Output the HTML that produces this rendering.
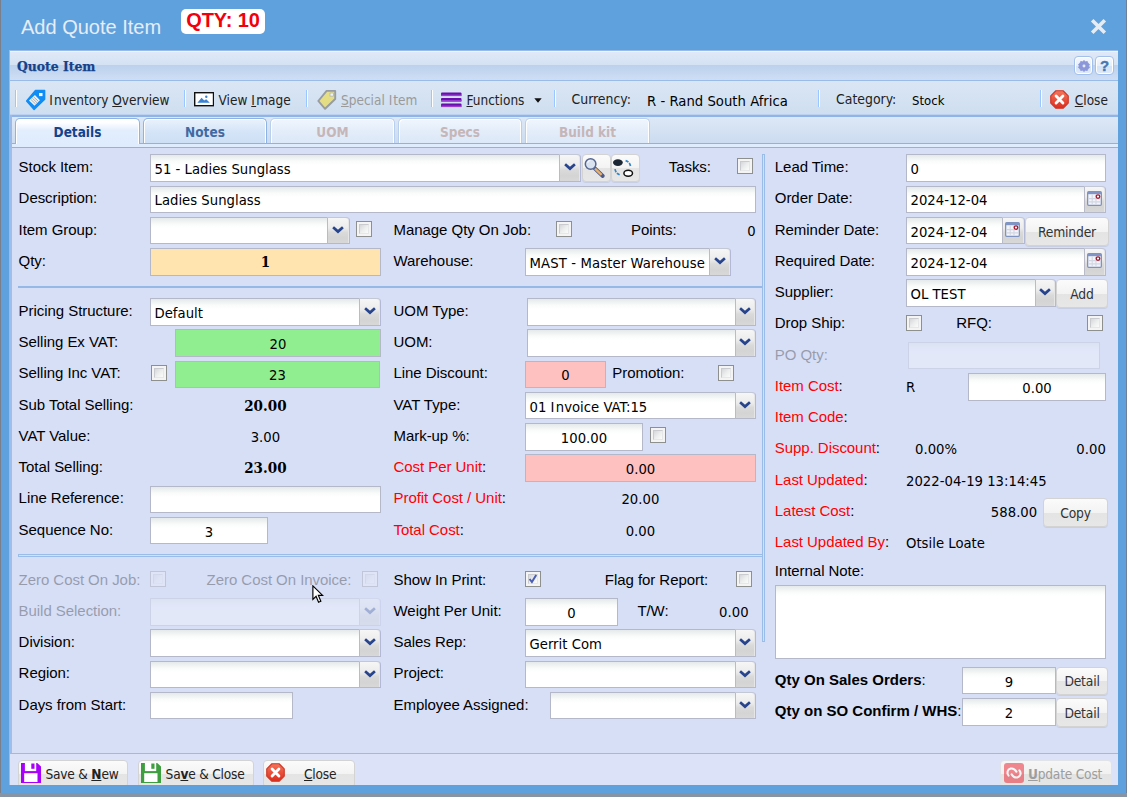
<!DOCTYPE html><html><head><meta charset="utf-8"><title>Add Quote Item</title><style>
*{box-sizing:border-box;}
html,body{margin:0;padding:0;}
body{width:1127px;height:797px;overflow:hidden;background:#5fa1dd;font-family:'Liberation Sans',sans-serif;position:relative;}
#root{position:absolute;left:0;top:0;width:1127px;height:797px;overflow:hidden;background:#5fa1dd;}
#root div, #root svg{position:absolute;}
.lb{font:15px/20px 'Liberation Sans',sans-serif;color:#000;white-space:nowrap;height:20px;letter-spacing:-0.05px;}
.lb.red{color:#000;} .lb.red b{color:#ff0000;font-weight:normal;}
.lb.dis{opacity:.3;}
.lb.bold{font-weight:bold;letter-spacing:0;} .lb.bold span{font-weight:normal;}
.tx{font:14.7px/21px 'DejaVu Sans Condensed','DejaVu Sans','Liberation Sans',sans-serif;color:#000;white-space:nowrap;height:21px;letter-spacing:0.02px;}
.tx.sb{font:bold 15px/21px 'DejaVu Serif Condensed','DejaVu Serif','Liberation Serif',serif;}
.in{border:1px solid #b5b8c8;background:#fff linear-gradient(#e5e9e9 0px,#eff2f2 3px,#f9fafa 6px,#fff 10px);font:15px 'DejaVu Sans Condensed','DejaVu Sans','Liberation Sans',sans-serif;color:#000;padding:1px 0 0 3.5px;letter-spacing:-0.12px;white-space:nowrap;overflow:hidden;}
.it{font:14.7px/21px 'DejaVu Sans Condensed','DejaVu Sans','Liberation Sans',sans-serif;color:#000;height:21px;white-space:nowrap;letter-spacing:0.02px;padding-left:4.5px;}
.it.green,.it.pink,.it.orange{padding-left:0;}
.it.orange{font:bold 15px/21px 'DejaVu Serif Condensed','DejaVu Serif','Liberation Serif',serif;}
.it.dis{opacity:.3;}
.in.green{background:#90ee90;padding-left:0;}
.in.pink{background:#ffc0c0;padding-left:0;}
.in.orange{background:#ffe4b0;padding-left:0;font:bold 15px 'DejaVu Serif Condensed','DejaVu Serif','Liberation Serif',serif;}
.in.dis, .tr.dis{opacity:.3;}
.tr{border:1px solid #b5b8c8;border-left:1px solid #b9bbc6;border-top-color:#c4c7d4;border-right-color:#b3b8d6;border-top-right-radius:4px;background:linear-gradient(#f6f6f6 0%,#ececec 40%,#dadada 58%,#d4d4d4 80%,#d8d8d8 100%);box-shadow:inset -1px 0 0 #e6e6e6;}
.tr .chev{left:50%;top:50%;margin-left:-6.5px;margin-top:-5px;}
.tr .cal{left:50%;top:50%;margin-left:-8.5px;margin-top:-9px;}
.ck{width:16px;height:16px;border:1px solid #8e8f8f;background:#f4f4f4;}
.ck i{position:absolute;display:block;left:2px;top:2px;width:10px;height:10px;border:1px solid #c9cbce;border-right-color:#e6e7e8;border-bottom-color:#e6e7e8;background:linear-gradient(135deg,#d5d7da 0%,#eceded 50%,#fbfbfb 100%);}
.ck.dis{opacity:.3;}
.bt{border:1px solid #d3d3d3;border-radius:4px;background:linear-gradient(#fbfbfb 0%,#f3f3f3 50%,#e4e4e4 51%,#e7e7e7 100%);font:13.75px 'DejaVu Sans Condensed','DejaVu Sans','Liberation Sans',sans-serif;color:#333;text-align:center;white-space:nowrap;letter-spacing:-0.2px;box-shadow:0 1px 0 rgba(190,195,215,.6);}
.bt u{text-decoration:underline;}
.bt.disb{border-color:#e2e3e6;background:linear-gradient(#f6f6f6 0%,#f1f1f1 50%,#e3e3e3 51%,#e6e6e6 100%);}
.tb{font:13.5px/20px 'DejaVu Sans Condensed','DejaVu Sans','Liberation Sans',sans-serif;color:#222;white-space:nowrap;height:20px;}
.tb b{font-weight:bold;}
.sep{width:2px;height:17px;border-left:1px solid #98c8ff;border-right:1px solid #fff;top:90px;}
.tab{top:118px;height:25px;border:1px solid #8db2e3;border-bottom:none;border-radius:5px 5px 0 0;font:bold 13.5px/26px 'DejaVu Sans Condensed','DejaVu Sans','Liberation Sans',sans-serif;text-align:center;color:#416aa3;background:linear-gradient(#eaf2fc 0%,#d6e5f8 50%,#cddff5 100%);box-shadow:inset 1px 1px 0 #fff, inset -1px 0 0 #fff;}
.tab.act{color:#15428b;background:linear-gradient(#ffffff 0%,#fdfeff 15%,#e3eefd 45%,#deecfd 100%);height:26px;}
.tab.dis{color:#c6b6b8;background:linear-gradient(#f1f6fd 0%,#e3edfa 50%,#dce8f8 100%);border-color:#b9cfee;}
</style></head><body><div id="root">
<div style="left:0;top:0;width:1px;height:797px;background:#7a7f8c;"></div>
<div style="left:0;top:793px;width:1127px;height:4px;background:#8893a3;"></div>
<div style="left:1126px;top:0;width:1px;height:793px;background:#6d7f99;"></div>
<div style="left:21px;top:15px;font:20px/24px 'Liberation Sans',sans-serif;color:#e6edf6;white-space:nowrap;">Add Quote Item</div>
<div style="left:181px;top:9px;width:84px;height:25px;border-radius:5px;background:#fff;font:bold 20px/23px 'Liberation Sans',sans-serif;color:#f2000c;text-align:center;white-space:nowrap;letter-spacing:-0.1px;">QTY: 10</div>
<svg style="left:1090px;top:18px" width="17" height="17" viewBox="0 0 17 17"><path d="M2.2 2.2 L14.8 14.8 M14.8 2.2 L2.2 14.8" stroke="#e4ecf6" stroke-width="3.6" fill="none"/></svg>
<div style="left:9px;top:50px;width:1109px;height:735px;border:1px solid #99bbe8;border-right:none;background:#d7dff7;"></div>
<div style="left:10px;top:51px;width:1108px;height:29px;background:linear-gradient(#ffffff 0px,#dfe9f7 1px,#d5e2f4 13.5px,#bdd0ed 14.5px,#c1d4ef 18px,#cedef4 29px);"></div>
<div style="left:10px;top:80px;width:1108px;height:1px;background:#99bbe8;"></div>
<div style="left:17px;top:56px;font:bold 13.75px/20px 'DejaVu Serif Condensed','DejaVu Serif','Liberation Serif',serif;color:#15428b;white-space:nowrap;-webkit-text-stroke:0.25px #15428b;">Quote Item</div>
<div style="left:1074px;top:56px;width:19px;height:19px;border:1px solid #a3c0ea;border-radius:4px;background:linear-gradient(#f6f9fe 0%,#e6effb 50%,#d3e3f8 51%,#dfeafa 100%);box-shadow:inset 0 0 0 1px #fff;"><svg style="left:2.5px;top:2.5px" width="12" height="12" viewBox="0 0 14 14"><path d="M7 0.6 L8.7 2 L10.9 1.7 L11.6 3.8 L13.4 5.1 L12.5 7 L13.4 8.9 L11.6 10.2 L10.9 12.3 L8.7 12 L7 13.4 L5.3 12 L3.1 12.3 L2.4 10.2 L0.6 8.9 L1.5 7 L0.6 5.1 L2.4 3.8 L3.1 1.7 L5.3 2 Z" fill="#8b97d8" stroke="#8b97d8" stroke-width=".9" stroke-linejoin="round"/><circle cx="7" cy="7" r="1.7" fill="#e4e9f8"/></svg></div>
<div style="left:1095px;top:56px;width:19px;height:19px;border:1px solid #a3c0ea;border-radius:4px;background:linear-gradient(#f6f9fe 0%,#e6effb 50%,#d3e3f8 51%,#dfeafa 100%);box-shadow:inset 0 0 0 1px #fff;"><div style="left:0;top:0;width:17px;height:17px;font:bold 15px/17px 'Liberation Sans',sans-serif;color:#4a78b0;text-align:center;-webkit-text-stroke:0.4px #4a78b0;">?</div></div>
<div style="left:10px;top:81px;width:1108px;height:34px;background:linear-gradient(#dbe6f4 0%,#d4e2f2 50%,#cfdef0 100%);"></div>
<div style="left:10px;top:117px;width:1108px;height:26px;background:linear-gradient(#dde8f6 0%,#ccdbf0 100%);"></div>
<div style="left:10px;top:114px;width:1108px;height:1px;background:#bcd1ef;"></div>
<div style="left:10px;top:115px;width:1108px;height:2px;background:#91b4e6;"></div>
<div style="left:10px;top:115px;width:2px;height:33px;background:#9dbae7;"></div>
<div style="left:10px;top:148px;width:2px;height:605px;background:#9fbee9;"></div>
<div style="left:10px;top:754px;width:1108px;height:31px;background:#dce3f8;"></div>
<div style="left:12px;top:143px;width:1106px;height:1px;background:#8db2e3;"></div>
<div style="left:12px;top:144px;width:1106px;height:3px;background:#deecfd;"></div>
<div style="left:12px;top:147px;width:1106px;height:1px;background:#8db2e3;"></div>
<div class="tab act" style="left:15px;width:125px;">Details</div>
<div class="tab " style="left:143px;width:124px;">Notes</div>
<div class="tab dis" style="left:270px;width:125px;">UOM</div>
<div class="tab dis" style="left:398px;width:124px;">Specs</div>
<div class="tab dis" style="left:525px;width:125px;">Build kit</div>
<svg style="left:25px;top:88px" width="22" height="24" viewBox="0 0 22 24"><path d="M10.4 2.4 H19.7 V11.2 L9.1 21.5 L1.6 13 Z" fill="#108cf5" stroke="#108cf5" stroke-width="1.3" stroke-linejoin="round"/><path d="M9.9 7.1 L14.95 12.2 L9.5 17.8 L4 12.6 Z" fill="#eef0f0"/><path d="M6 11.6 L10.6 16 M7.3 10.2 L12 14.7 M8.7 8.9 L13.3 13.3" stroke="#a9b0b6" stroke-width="1" fill="none"/><rect x="14.1" y="5" width="3.4" height="3.1" fill="#fff"/></svg>
<div class="tb" style="left:49.2px;top:89.5px;"><span style="letter-spacing:1.2px">I</span>nventory <u>O</u>verview</div>
<div class="sep" style="left:15px;"></div>
<div class="sep" style="left:184px;"></div>
<div class="sep" style="left:306px;"></div>
<div class="sep" style="left:431px;"></div>
<div class="sep" style="left:554px;"></div>
<div class="sep" style="left:818px;"></div>
<div class="sep" style="left:1040px;"></div>
<svg style="left:194px;top:92px" width="20" height="15" viewBox="0 0 20 15"><rect x="0.7" y="0.7" width="18.8" height="13" fill="#fff" stroke="#111" stroke-width="1.4"/><path d="M3.4 10.8 L7.6 5.8 L10.2 8.6 L12.2 7.2 L15.8 10.8 Z" fill="#3a82d2"/><circle cx="12.3" cy="4.7" r="1.2" fill="#3a82d2"/></svg>
<div class="tb" style="left:218.6px;top:89.5px;">View <u style="letter-spacing:1.3px">I</u>mage</div>
<svg style="left:316.2px;top:88px;opacity:.6" width="22" height="24" viewBox="0 0 22 24"><path d="M10.6 2.9 H19.2 V11 L9.1 20.8 L2.3 13 Z" fill="#f2dc3c" stroke="#6f6f6f" stroke-width="1.9" stroke-linejoin="round"/><rect x="14" y="5" width="3.4" height="3.1" fill="#fff" stroke="#8a8a8a" stroke-width=".7"/></svg>
<div class="tb" style="left:341px;top:89.5px;color:#9a9a9a;"><u>S</u>pecial <span style="letter-spacing:1.1px">I</span>tem</div>
<svg style="left:441px;top:92px" width="21" height="16" viewBox="0 0 21 16"><rect x="0" y="0.5" width="20.5" height="3.6" rx="1" fill="#6a0dad"/><rect x="0" y="6" width="20.5" height="3.6" rx="1" fill="#6a0dad"/><rect x="0" y="11.5" width="20.5" height="3.6" rx="1" fill="#6a0dad"/><rect x="0" y="2.6" width="20.5" height="1.5" fill="#9a3fd0"/><rect x="0" y="8.1" width="20.5" height="1.5" fill="#9a3fd0"/><rect x="0" y="13.6" width="20.5" height="1.5" fill="#9a3fd0"/></svg>
<div class="tb" style="left:466.5px;top:89.5px;"><u>F</u>unctions</div>
<svg style="left:534px;top:98px" width="8" height="5" viewBox="0 0 8 5"><path d="M0.3 0.3 H7.7 L4 4.7 Z" fill="#111"/></svg>
<div class="tb" style="left:571.5px;top:89.5px;top:88.8px;font-size:13.9px;">Currency:</div>
<div class="tx" style="left:647px;top:90px;">R - Rand South Africa</div>
<div class="tb" style="left:836px;top:89.5px;top:88.8px;font-size:13.9px;">Category:</div>
<div class="tx" style="left:912px;top:90px;font-size:13px;">Stock</div>
<svg style="left:1050px;top:90px" width="19" height="19" viewBox="0 0 20 20"><defs><linearGradient id="cg1050" x1="0" y1="0" x2="0" y2="1"><stop offset="0" stop-color="#f4765c"/><stop offset="1" stop-color="#dc2c1c"/></linearGradient></defs><path d="M6.2 0.8 H13.8 L19.2 6.2 V13.8 L13.8 19.2 H6.2 L0.8 13.8 V6.2 Z" fill="url(#cg1050)" stroke="#cf3524" stroke-width="1.2" stroke-linejoin="round"/><path d="M6.4 6.4 L13.6 13.6 M13.6 6.4 L6.4 13.6" stroke="#fff" stroke-width="3" stroke-linecap="round"/></svg>
<div class="tb" style="left:1074.8px;top:89.5px;"><u>C</u>lose</div>
<div style="left:18px;top:286px;width:745px;height:2px;background:#95b8e7;"></div>
<div style="left:18px;top:554px;width:745px;height:3px;border:1px solid #9abce8;border-right:none;"></div>
<div style="left:762px;top:154px;width:3px;height:488px;border:1px solid #9abce8;"></div>
<div class="lb " style="left:18.6px;top:157px;">Stock Item:</div>
<div class="in " style="left:150px;top:154px;width:409px;height:28px;border-right:none;"></div>
<div class="it " style="left:150px;top:158px;width:409px;text-align:left;">51 - Ladies Sunglass</div>
<div class="tr  t-chev" style="left:559px;top:154px;width:22px;height:28px;"><svg class="chev" width="12" height="8" viewBox="0 0 12 8"><path d="M1.1 1.3 L6 5.6 L10.9 1.3" fill="none" stroke="#27448c" stroke-width="2.7" stroke-linejoin="miter"/></svg></div>
<div class="lb " style="left:18.6px;top:188px;">Description:</div>
<div class="in " style="left:150px;top:186px;width:606px;height:27px;"></div>
<div class="it " style="left:150px;top:189px;width:606px;text-align:left;">Ladies Sunglass</div>
<div class="lb " style="left:18.6px;top:220px;">Item Group:</div>
<div class="in " style="left:150px;top:217px;width:177px;height:27px;border-right:none;"></div>
<div class="tr  t-chev" style="left:327px;top:217px;width:23px;height:27px;"><svg class="chev" width="12" height="8" viewBox="0 0 12 8"><path d="M1.1 1.3 L6 5.6 L10.9 1.3" fill="none" stroke="#27448c" stroke-width="2.7" stroke-linejoin="miter"/></svg></div>
<div class="ck " style="left:356px;top:221px;"><i></i></div>
<div class="lb " style="left:393.5px;top:220px;">Manage Qty On Job:</div>
<div class="ck " style="left:556px;top:221px;"><i></i></div>
<div class="lb " style="left:631px;top:220px;">Points:</div>
<div class="tx " style="right:371.4px;top:220.00px;">0</div>
<div class="lb " style="left:18.6px;top:251px;">Qty:</div>
<div class="in orange" style="left:150px;top:248px;width:231px;height:28px;"></div>
<div class="it orange" style="left:150px;top:252px;width:231px;text-align:center;padding-left:0;">1</div>
<div class="lb " style="left:393.5px;top:251px;">Warehouse:</div>
<div class="in " style="left:525px;top:248px;width:184px;height:28px;border-right:none;"></div>
<div class="it " style="left:525px;top:252px;width:184px;text-align:left;"><span style="letter-spacing:0.12px">MAST - Master Warehouse</span></div>
<div class="tr  t-chev" style="left:709px;top:248px;width:22px;height:28px;"><svg class="chev" width="12" height="8" viewBox="0 0 12 8"><path d="M1.1 1.3 L6 5.6 L10.9 1.3" fill="none" stroke="#27448c" stroke-width="2.7" stroke-linejoin="miter"/></svg></div>
<div class="bt " style="left:582px;top:154px;width:29px;height:28px;line-height:27px;"><svg style="left:0;top:0" width="27" height="26" viewBox="0 0 27 26"><path d="M11.4 13 L19.8 21" stroke="#4d5a88" stroke-width="3.8" stroke-linecap="round"/><path d="M12 13.6 L18.6 19.9" stroke="#e8b06a" stroke-width="2.3" stroke-linecap="butt"/><circle cx="7.6" cy="9" r="5.3" fill="#d9e2ef" stroke="#566792" stroke-width="1.5"/><path d="M4.6 8 A3.2 3.2 0 0 1 7.4 5.4" stroke="#f3f6fb" stroke-width="1.2" fill="none"/></svg></div>
<div class="bt " style="left:611px;top:154px;width:29px;height:28px;line-height:27px;"><svg style="left:0;top:0" width="27" height="26" viewBox="0 0 27 26"><ellipse cx="5.9" cy="7.6" rx="4.9" ry="3.3" fill="#1a2633"/><ellipse cx="16.2" cy="18.3" rx="4.3" ry="3" fill="#fff" stroke="#111" stroke-width="1.5"/><path d="M13.6 5.6 Q17.8 7 18.6 11.4" fill="none" stroke="#2f86c9" stroke-width="1.7" stroke-dasharray="3.2 1.2"/><path d="M3 14.2 Q3.8 18.6 8.2 20" fill="none" stroke="#2f86c9" stroke-width="1.7" stroke-dasharray="3.2 1.2"/></svg></div>
<div class="lb " style="left:668.7px;top:157px;">Tasks:</div>
<div class="ck " style="left:737px;top:158px;"><i></i></div>
<div class="lb " style="left:18.6px;top:301px;">Pricing Structure:</div>
<div class="in " style="left:150px;top:298px;width:209px;height:28px;border-right:none;"></div>
<div class="it " style="left:150px;top:302px;width:209px;text-align:left;">Default</div>
<div class="tr  t-chev" style="left:359px;top:298px;width:22px;height:28px;"><svg class="chev" width="12" height="8" viewBox="0 0 12 8"><path d="M1.1 1.3 L6 5.6 L10.9 1.3" fill="none" stroke="#27448c" stroke-width="2.7" stroke-linejoin="miter"/></svg></div>
<div class="lb " style="left:393.5px;top:301px;">UOM Type:</div>
<div class="in " style="left:527px;top:298px;width:208px;height:28px;border-right:none;"></div>
<div class="tr  t-chev" style="left:735px;top:298px;width:21px;height:28px;"><svg class="chev" width="12" height="8" viewBox="0 0 12 8"><path d="M1.1 1.3 L6 5.6 L10.9 1.3" fill="none" stroke="#27448c" stroke-width="2.7" stroke-linejoin="miter"/></svg></div>
<div class="lb " style="left:18.6px;top:332px;">Selling Ex VAT:</div>
<div class="in green" style="left:175px;top:329px;width:206px;height:28px;"></div>
<div class="it green" style="left:175px;top:333px;width:206px;text-align:center;padding-left:0;">20</div>
<div class="lb " style="left:393.5px;top:332px;">UOM:</div>
<div class="in " style="left:527px;top:329px;width:208px;height:28px;border-right:none;"></div>
<div class="tr  t-chev" style="left:735px;top:329px;width:21px;height:28px;"><svg class="chev" width="12" height="8" viewBox="0 0 12 8"><path d="M1.1 1.3 L6 5.6 L10.9 1.3" fill="none" stroke="#27448c" stroke-width="2.7" stroke-linejoin="miter"/></svg></div>
<div class="lb " style="left:18.6px;top:363px;">Selling Inc VAT:</div>
<div class="ck " style="left:151px;top:365px;"><i></i></div>
<div class="in green" style="left:175px;top:361px;width:205px;height:27px;"></div>
<div class="it green" style="left:175px;top:364px;width:205px;text-align:center;padding-left:0;">23</div>
<div class="lb " style="left:393.5px;top:363px;">Line Discount:</div>
<div class="in pink" style="left:525px;top:361px;width:81px;height:27px;"></div>
<div class="it pink" style="left:525px;top:364px;width:81px;text-align:center;padding-left:0;">0</div>
<div class="lb " style="left:612.3px;top:363px;">Promotion:</div>
<div class="ck " style="left:718px;top:365px;"><i></i></div>
<div class="lb " style="left:18.6px;top:395px;">Sub Total Selling:</div>
<div class="tx sb" style="left:165.39999999999998px;width:200px;text-align:center;top:396.00px;">20.00</div>
<div class="lb " style="left:393.5px;top:395px;">VAT Type:</div>
<div class="in " style="left:525px;top:392px;width:210px;height:27px;border-right:none;"></div>
<div class="it " style="left:525px;top:396px;width:210px;text-align:left;">01 <span style="letter-spacing:1.3px">I</span>nvoice VAT:15</div>
<div class="tr  t-chev" style="left:735px;top:392px;width:21px;height:27px;"><svg class="chev" width="12" height="8" viewBox="0 0 12 8"><path d="M1.1 1.3 L6 5.6 L10.9 1.3" fill="none" stroke="#27448c" stroke-width="2.7" stroke-linejoin="miter"/></svg></div>
<div class="lb " style="left:18.6px;top:426px;">VAT Value:</div>
<div class="tx " style="left:165.39999999999998px;width:200px;text-align:center;top:426.00px;">3.00</div>
<div class="lb " style="left:393.5px;top:426px;">Mark-up %:</div>
<div class="in " style="left:525px;top:423px;width:118px;height:28px;padding-left:0;"></div>
<div class="it " style="left:525px;top:427px;width:118px;text-align:center;padding-left:0;">100.00</div>
<div class="ck " style="left:650px;top:427px;"><i></i></div>
<div class="lb " style="left:18.6px;top:457px;">Total Selling:</div>
<div class="tx sb" style="left:165.39999999999998px;width:200px;text-align:center;top:458.00px;">23.00</div>
<div class="lb red" style="left:393.5px;top:457px;"><b>Cost Per Unit</b>:</div>
<div class="in pink" style="left:525px;top:454px;width:231px;height:28px;"></div>
<div class="it pink" style="left:525px;top:458px;width:231px;text-align:center;padding-left:0;">0.00</div>
<div class="lb " style="left:18.6px;top:488px;">Line Reference:</div>
<div class="in " style="left:150px;top:486px;width:231px;height:27px;"></div>
<div class="lb red" style="left:393.5px;top:488px;"><b>Profit Cost / Unit</b>:</div>
<div class="tx " style="left:540.4px;width:200px;text-align:center;top:488.00px;">20.00</div>
<div class="lb " style="left:18.6px;top:520px;">Sequence No:</div>
<div class="in " style="left:150px;top:517px;width:118px;height:27px;padding-left:0;"></div>
<div class="it " style="left:150px;top:521px;width:118px;text-align:center;padding-left:0;">3</div>
<div class="lb red" style="left:393.5px;top:520px;"><b>Total Cost</b>:</div>
<div class="tx " style="left:540.4px;width:200px;text-align:center;top:520.00px;">0.00</div>
<div class="lb dis" style="left:18.6px;top:570px;">Zero Cost On Job:</div>
<div class="ck dis" style="left:150px;top:571px;"><i></i></div>
<div class="lb dis" style="left:206.6px;top:570px;">Zero Cost On Invoice:</div>
<div class="ck dis" style="left:362px;top:571px;"><i></i></div>
<div class="lb " style="left:393.5px;top:570px;">Show In Print:</div>
<div class="ck " style="left:525px;top:571px;"><i></i><svg width="16" height="16" viewBox="0 0 16 16" style="position:absolute;left:-1px;top:-1px"><path d="M4.6 8 L6.9 11 L11.2 3.9" fill="none" stroke="#4a5fb4" stroke-width="2"/></svg></div>
<div class="lb " style="left:604.8px;top:570px;">Flag for Report:</div>
<div class="ck " style="left:736px;top:571px;"><i></i></div>
<div class="lb dis" style="left:18.6px;top:601px;">Build Selection:</div>
<div class="in dis" style="left:150px;top:598px;width:209px;height:28px;border-right:none;"></div>
<div class="tr dis t-chev" style="left:359px;top:598px;width:22px;height:28px;"><svg class="chev" width="12" height="8" viewBox="0 0 12 8"><path d="M1.1 1.3 L6 5.6 L10.9 1.3" fill="none" stroke="#27448c" stroke-width="2.7" stroke-linejoin="miter"/></svg></div>
<div class="lb " style="left:393.5px;top:601px;">Weight Per Unit:</div>
<div class="in " style="left:525px;top:598px;width:93px;height:28px;padding-left:0;"></div>
<div class="it " style="left:525px;top:602px;width:93px;text-align:center;padding-left:0;">0</div>
<div class="lb " style="left:637.4px;top:601px;">T/W:</div>
<div class="tx " style="right:378.4px;top:601.00px;">0.00</div>
<div class="lb " style="left:18.6px;top:632px;">Division:</div>
<div class="in " style="left:150px;top:629px;width:209px;height:28px;border-right:none;"></div>
<div class="tr  t-chev" style="left:359px;top:629px;width:22px;height:28px;"><svg class="chev" width="12" height="8" viewBox="0 0 12 8"><path d="M1.1 1.3 L6 5.6 L10.9 1.3" fill="none" stroke="#27448c" stroke-width="2.7" stroke-linejoin="miter"/></svg></div>
<div class="lb " style="left:393.5px;top:632px;">Sales Rep:</div>
<div class="in " style="left:525px;top:629px;width:210px;height:28px;border-right:none;"></div>
<div class="it " style="left:525px;top:633px;width:210px;text-align:left;">Gerrit Com</div>
<div class="tr  t-chev" style="left:735px;top:629px;width:21px;height:28px;"><svg class="chev" width="12" height="8" viewBox="0 0 12 8"><path d="M1.1 1.3 L6 5.6 L10.9 1.3" fill="none" stroke="#27448c" stroke-width="2.7" stroke-linejoin="miter"/></svg></div>
<div class="lb " style="left:18.6px;top:663px;">Region:</div>
<div class="in " style="left:150px;top:661px;width:209px;height:27px;border-right:none;"></div>
<div class="tr  t-chev" style="left:359px;top:661px;width:22px;height:27px;"><svg class="chev" width="12" height="8" viewBox="0 0 12 8"><path d="M1.1 1.3 L6 5.6 L10.9 1.3" fill="none" stroke="#27448c" stroke-width="2.7" stroke-linejoin="miter"/></svg></div>
<div class="lb " style="left:393.5px;top:663px;">Project:</div>
<div class="in " style="left:525px;top:661px;width:210px;height:27px;border-right:none;"></div>
<div class="tr  t-chev" style="left:735px;top:661px;width:21px;height:27px;"><svg class="chev" width="12" height="8" viewBox="0 0 12 8"><path d="M1.1 1.3 L6 5.6 L10.9 1.3" fill="none" stroke="#27448c" stroke-width="2.7" stroke-linejoin="miter"/></svg></div>
<div class="lb " style="left:18.6px;top:695px;">Days from Start:</div>
<div class="in " style="left:150px;top:692px;width:143px;height:27px;"></div>
<div class="lb " style="left:393.5px;top:695px;">Employee Assigned:</div>
<div class="in " style="left:550px;top:692px;width:185px;height:27px;border-right:none;"></div>
<div class="tr  t-chev" style="left:735px;top:692px;width:21px;height:27px;"><svg class="chev" width="12" height="8" viewBox="0 0 12 8"><path d="M1.1 1.3 L6 5.6 L10.9 1.3" fill="none" stroke="#27448c" stroke-width="2.7" stroke-linejoin="miter"/></svg></div>
<div class="lb " style="left:774.8px;top:157px;">Lead Time:</div>
<div class="in " style="left:906px;top:154px;width:200px;height:28px;"></div>
<div class="it " style="left:906px;top:158px;width:200px;text-align:left;">0</div>
<div class="lb " style="left:774.8px;top:188px;">Order Date:</div>
<div class="in " style="left:906px;top:186px;width:178px;height:27px;border-right:none;"></div>
<div class="it " style="left:906px;top:189px;width:178px;text-align:left;">2024-12-04</div>
<div class="tr  t-cal" style="left:1084px;top:186px;width:22px;height:27px;"><svg class="cal" width="15" height="15" viewBox="0 0 15 15"><rect x="0.65" y="0.65" width="13.7" height="13.7" rx="1" fill="#f3f4f8" stroke="#7f93c2" stroke-width="1.3"/><rect x="1" y="1" width="13" height="2.2" fill="#8094c6"/><path d="M1.4 7.6H13.6M1.4 10.9H13.6M5.2 3.6V13.6M9 3.6V13.6" stroke="#d2d6e3" stroke-width="1.1"/><circle cx="11" cy="5.6" r="1.8" fill="#fff" stroke="#a3182e" stroke-width="1.3"/></svg></div>
<div class="lb " style="left:774.8px;top:220px;">Reminder Date:</div>
<div class="in " style="left:906px;top:217px;width:96px;height:27px;border-right:none;"></div>
<div class="it " style="left:906px;top:221px;width:96px;text-align:left;">2024-12-04</div>
<div class="tr  t-cal" style="left:1002px;top:217px;width:23px;height:27px;"><svg class="cal" width="15" height="15" viewBox="0 0 15 15"><rect x="0.65" y="0.65" width="13.7" height="13.7" rx="1" fill="#f3f4f8" stroke="#7f93c2" stroke-width="1.3"/><rect x="1" y="1" width="13" height="2.2" fill="#8094c6"/><path d="M1.4 7.6H13.6M1.4 10.9H13.6M5.2 3.6V13.6M9 3.6V13.6" stroke="#d2d6e3" stroke-width="1.1"/><circle cx="11" cy="5.6" r="1.8" fill="#fff" stroke="#a3182e" stroke-width="1.3"/></svg></div>
<div class="bt " style="left:1025px;top:217px;width:84px;height:29px;line-height:28px;">Reminder</div>
<div class="lb " style="left:774.8px;top:251px;">Required Date:</div>
<div class="in " style="left:906px;top:248px;width:178px;height:28px;border-right:none;"></div>
<div class="it " style="left:906px;top:252px;width:178px;text-align:left;">2024-12-04</div>
<div class="tr  t-cal" style="left:1084px;top:248px;width:22px;height:28px;"><svg class="cal" width="15" height="15" viewBox="0 0 15 15"><rect x="0.65" y="0.65" width="13.7" height="13.7" rx="1" fill="#f3f4f8" stroke="#7f93c2" stroke-width="1.3"/><rect x="1" y="1" width="13" height="2.2" fill="#8094c6"/><path d="M1.4 7.6H13.6M1.4 10.9H13.6M5.2 3.6V13.6M9 3.6V13.6" stroke="#d2d6e3" stroke-width="1.1"/><circle cx="11" cy="5.6" r="1.8" fill="#fff" stroke="#a3182e" stroke-width="1.3"/></svg></div>
<div class="lb " style="left:774.8px;top:282px;">Supplier:</div>
<div class="in " style="left:906px;top:279px;width:129px;height:28px;border-right:none;"></div>
<div class="it " style="left:906px;top:283px;width:129px;text-align:left;">OL TEST</div>
<div class="tr  t-chev" style="left:1035px;top:279px;width:21px;height:28px;"><svg class="chev" width="12" height="8" viewBox="0 0 12 8"><path d="M1.1 1.3 L6 5.6 L10.9 1.3" fill="none" stroke="#27448c" stroke-width="2.7" stroke-linejoin="miter"/></svg></div>
<div class="bt " style="left:1056px;top:279px;width:52px;height:29px;line-height:28px;">Add</div>
<div class="lb " style="left:774.8px;top:313px;">Drop Ship:</div>
<div class="ck " style="left:906px;top:315px;"><i></i></div>
<div class="lb " style="left:956.3px;top:313px;">RFQ:</div>
<div class="ck " style="left:1087px;top:315px;"><i></i></div>
<div class="lb dis" style="left:774.8px;top:345px;">PO Qty:</div>
<div class="in dis" style="left:908px;top:342px;width:192px;height:27px;"></div>
<div class="lb red" style="left:774.8px;top:376px;"><b>Item Cost</b>:</div>
<div class="tx " style="left:906px;top:376.00px;">R</div>
<div class="in " style="left:968px;top:373px;width:138px;height:28px;padding-left:0;"></div>
<div class="it " style="left:968px;top:377px;width:138px;text-align:center;padding-left:0;">0.00</div>
<div class="lb red" style="left:774.8px;top:407px;"><b>Item Code</b>:</div>
<div class="lb red" style="left:774.8px;top:438px;"><b>Supp. Discount</b>:</div>
<div class="tx " style="left:915px;top:438.00px;">0.00%</div>
<div class="tx " style="right:21.200000000000045px;top:438.00px;">0.00</div>
<div class="lb red" style="left:774.8px;top:470px;"><b>Last Updated</b>:</div>
<div class="tx " style="left:906px;top:470.00px;">2022-04-19 13:14:45</div>
<div class="lb red" style="left:774.8px;top:501px;"><b>Latest Cost</b>:</div>
<div class="tx " style="right:89.79999999999995px;top:501.00px;">588.00</div>
<div class="bt " style="left:1043px;top:498px;width:65px;height:29px;line-height:28px;">Copy</div>
<div class="lb red" style="left:774.8px;top:532px;"><b>Last Updated By</b>:</div>
<div class="tx " style="left:906px;top:532.00px;">Otsile Loate</div>
<div class="lb " style="left:774.8px;top:561px;">Internal Note:</div>
<div class="in " style="left:775px;top:585px;width:331px;height:74px;"></div>
<div class="lb bold" style="left:774.8px;top:670px;">Qty On Sales Orders<span>:</span></div>
<div class="in " style="left:962px;top:667px;width:94px;height:27px;padding-left:0;"></div>
<div class="it " style="left:962px;top:671px;width:94px;text-align:center;padding-left:0;">9</div>
<div class="bt " style="left:1056px;top:667px;width:52px;height:28px;line-height:27px;">Detail</div>
<div class="lb bold" style="left:774.8px;top:701px;">Qty on SO Confirm / WHS<span>:</span></div>
<div class="in " style="left:962px;top:698px;width:94px;height:28px;padding-left:0;"></div>
<div class="it " style="left:962px;top:702px;width:94px;text-align:center;padding-left:0;">2</div>
<div class="bt " style="left:1056px;top:698px;width:52px;height:29px;line-height:28px;">Detail</div>
<div style="left:10px;top:753px;width:1108px;height:1px;background:#99bbe8;"></div>
<div style="left:10px;top:754px;width:1108px;height:31px;overflow:hidden;">
<div class="bt " style="left:8px;top:6px;width:110px;height:28px;border-radius:4px;box-shadow:none;"><svg style="left:2px;top:2px" width="20" height="20" viewBox="0 0 20 20"><path d="M0 0 H16.2 L20 3.4 V20 H0 Z" fill="#a800fb"/><rect x="3.9" y="0" width="11.3" height="8.1" fill="#fff"/><rect x="10.3" y="0.5" width="3.2" height="5.3" fill="#a800fb"/><rect x="3.2" y="10.2" width="13.3" height="8.8" fill="#fff"/></svg><div class="tb" style="left:26.4px;top:3px;font-size:13.6px;color:#222">Save &amp; <b><u>N</u></b>ew</div></div>
<div class="bt " style="left:128px;top:6px;width:116px;height:28px;border-radius:4px;box-shadow:none;"><svg style="left:2px;top:2px" width="20" height="20" viewBox="0 0 20 20"><path d="M0 0 H16.2 L20 3.4 V20 H0 Z" fill="#3f9e3f"/><rect x="3.9" y="0" width="11.3" height="8.1" fill="#fff"/><rect x="10.3" y="0.5" width="3.2" height="5.3" fill="#3f9e3f"/><rect x="3.2" y="10.2" width="13.3" height="8.8" fill="#fff"/></svg><div class="tb" style="left:26.6px;top:3px;font-size:13.6px;color:#222">Sa<b><u>v</u></b>e &amp; Close</div></div>
<div class="bt " style="left:253px;top:6px;width:92px;height:28px;border-radius:4px;box-shadow:none;"><svg style="left:2px;top:2px" width="19" height="19" viewBox="0 0 20 20"><defs><linearGradient id="cg2" x1="0" y1="0" x2="0" y2="1"><stop offset="0" stop-color="#f4765c"/><stop offset="1" stop-color="#dc2c1c"/></linearGradient></defs><path d="M6.2 0.8 H13.8 L19.2 6.2 V13.8 L13.8 19.2 H6.2 L0.8 13.8 V6.2 Z" fill="url(#cg2)" stroke="#cf3524" stroke-width="1.2" stroke-linejoin="round"/><path d="M6.4 6.4 L13.6 13.6 M13.6 6.4 L6.4 13.6" stroke="#fff" stroke-width="3" stroke-linecap="round"/></svg><div class="tb" style="left:40px;top:3px;font-size:13.6px;color:#222"><u>C</u>lose</div></div>
<div class="bt disb" style="left:990px;top:6px;width:112px;height:28px;border-radius:4px;box-shadow:none;"><svg style="left:3px;top:2px;opacity:.5" width="20" height="20" viewBox="0 0 20 20"><rect x="0" y="0" width="20" height="20" rx="3" fill="#ec1c2a"/><path d="M4.6 12.6 C2.4 10 3.4 6.4 6.6 5.6 C9.4 5 11.4 7 12.4 8.6" fill="none" stroke="#fff" stroke-width="2.1" stroke-linecap="round"/><path d="M15.4 7.4 C17.6 10 16.6 13.6 13.4 14.4 C10.6 15 8.6 13 7.6 11.4" fill="none" stroke="#fff" stroke-width="2.1" stroke-linecap="round"/></svg><div class="tb" style="left:27px;top:3px;font-size:13.6px;color:#9d9d9d"><b><u>U</u></b>pdate Cost</div></div>
</div>
<svg style="left:312px;top:584.6px" width="12.4" height="18.6" viewBox="0 0 14 21"><path d="M1 1 V16.2 L4.6 12.8 L7.4 19.4 L10 18.3 L7.2 11.8 H12 Z" fill="#fff" stroke="#000" stroke-width="1.3" stroke-linejoin="miter"/></svg>
</div></body></html>
